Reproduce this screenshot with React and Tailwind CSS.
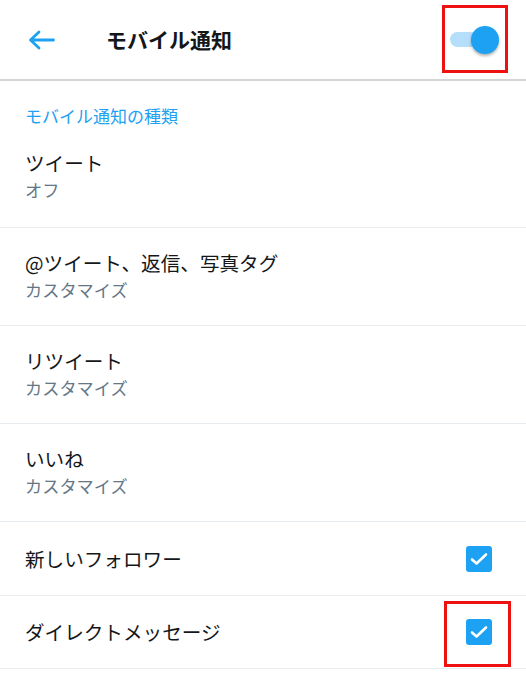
import React from "react";

const font = { fontFamily: '"Noto Sans CJK JP", "Noto Sans", sans-serif' };

function Check() {
  return (
    <div className="w-[26px] h-[26px] rounded-[3px] bg-[#1DA1F2] flex items-center justify-center">
      <svg width="18" height="14" viewBox="0 0 18 14" fill="none">
        <path d="M2 7.5 L6.5 11.5 L16 2.5" stroke="white" strokeWidth="2.6" strokeLinecap="round" strokeLinejoin="round" />
      </svg>
    </div>
  );
}

function TwoLine({ title, sub }) {
  return (
    <div className="pl-[25px] pt-[21px] pb-[22px] border-b border-[#e6ecf0]">
      <div className="text-[19.6px] leading-[28px] text-[#14171a]">{title}</div>
      <div className="text-[17.2px] leading-[26px] text-[#657786]">{sub}</div>
    </div>
  );
}

export default function App() {
  return (
    <div className="w-[526px] h-[680px] bg-white overflow-hidden" style={font}>
      <div className="h-[81px] border-b-2 border-[#d4d4d4] flex items-center relative">
        <div className="w-[106px] pl-[28px] flex items-center">
          <svg width="27" height="20" viewBox="0 0 27 20" fill="none">
            <path d="M25.5 10 H3 M11 2 L2.5 10 L11 18" stroke="#1DA1F2" strokeWidth="2.8" strokeLinecap="round" strokeLinejoin="round" />
          </svg>
        </div>
        <div className="text-[21px] font-bold text-[#14171a]">モバイル通知</div>
        <div className="ml-auto mr-[26px] relative w-[50px] h-[28px] flex items-center">
          <div className="w-[40px] h-[15px] rounded-full bg-[#b5defa]" />
          <div className="absolute right-[1px] top-[0px] w-[28px] h-[28px] rounded-full bg-[#1DA1F2] shadow-[0_2px_3px_rgba(0,0,0,0.3)]" />
        </div>
        <div className="absolute left-[442px] top-[5px] w-[66px] h-[68px] border-[3px] border-[#ee1111]" />
      </div>
      <div className="pl-[25px] pt-[23px] text-[17px] leading-[24px] text-[#1DA1F2]">モバイル通知の種類</div>
      <div className="pl-[25px] pt-[21px] pb-[24px] border-b border-[#e6ecf0]">
        <div className="text-[19.6px] leading-[28px] text-[#14171a]">ツイート</div>
        <div className="text-[17.2px] leading-[26px] text-[#657786]">オフ</div>
      </div>
      <TwoLine title="@ツイート、返信、写真タグ" sub="カスタマイズ" />
      <TwoLine title="リツイート" sub="カスタマイズ" />
      <TwoLine title="いいね" sub="カスタマイズ" />
      <div className="h-[74px] pl-[25px] pr-[34px] flex items-center justify-between border-b border-[#e6ecf0]">
        <div className="text-[19.6px] text-[#14171a]">新しいフォロワー</div>
        <Check />
      </div>
      <div className="h-[73px] pl-[25px] pr-[34px] flex items-center justify-between border-b border-[#e6ecf0] relative">
        <div className="text-[19.6px] text-[#14171a]">ダイレクトメッセージ</div>
        <Check />
        <div className="absolute left-[444px] top-[5px] w-[67px] h-[66px] border-[3px] border-[#ee1111]" />
      </div>
    </div>
  );
}
